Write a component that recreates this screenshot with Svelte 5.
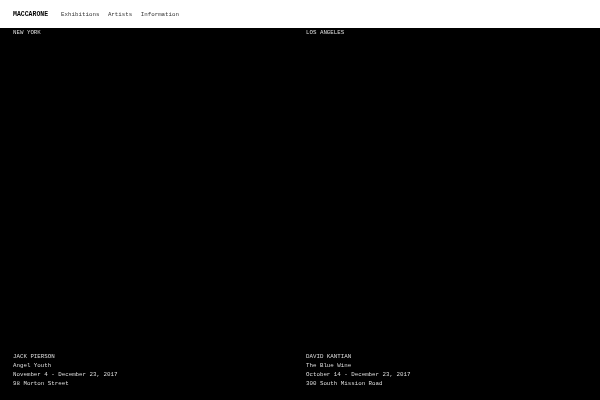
<script>
    const shows = [
        {
            city: "NEW YORK",
            lines: ["JACK PIERSON", "Angel Youth", "November 4 - December 23, 2017", "98 Morton Street"],
        },
        {
            city: "LOS ANGELES",
            lines: ["DAVID KANTIAN", "The Blue Wine", "October 14 - December 23, 2017", "300 South Mission Road"],
        },
    ];
</script>

<header>
    <strong>MACCARONE</strong>
    <nav>
        <a href="#exhibitions">Exhibitions</a>
        <a href="#artists">Artists</a>
        <a href="#information">Information</a>
    </nav>
</header>

<main>
    {#each shows as show}
        <section>
            <div class="city">{show.city}</div>
            <div class="info">
                {#each show.lines as line}
                    <div>{line}</div>
                {/each}
            </div>
        </section>
    {/each}
</main>

<style>
    :global(body) {
        background: #000;
    }
    header {
        height: 28px;
        background: #fff;
        color: #000;
        display: flex;
        align-items: center;
        gap: 13px;
        padding: 0 13px;
        font-family: "Liberation Mono", monospace;
        font-size: 5.8px;
    }
    strong {
        font-size: 6.5px;
        will-change: opacity;
    }
    nav {
        display: flex;
        gap: 8.5px;
        color: #333;
        will-change: opacity;
    }
    a {
        color: inherit;
        text-decoration: none;
    }
    main {
        height: 372px;
        box-sizing: border-box;
        padding: 2px 13px 13px;
        display: grid;
        grid-template-columns: 1fr 1fr;
        gap: 12px;
        background: #000;
        color: #ddd;
        font-family: "Liberation Mono", monospace;
        font-size: 5.8px;
    }
    section {
        display: flex;
        flex-direction: column;
        justify-content: space-between;
    }
    .city {
        line-height: 6px;
        will-change: opacity;
    }
    .info {
        display: flex;
        flex-direction: column;
        gap: 3px;
        line-height: 6px;
        will-change: opacity;
    }
</style>
